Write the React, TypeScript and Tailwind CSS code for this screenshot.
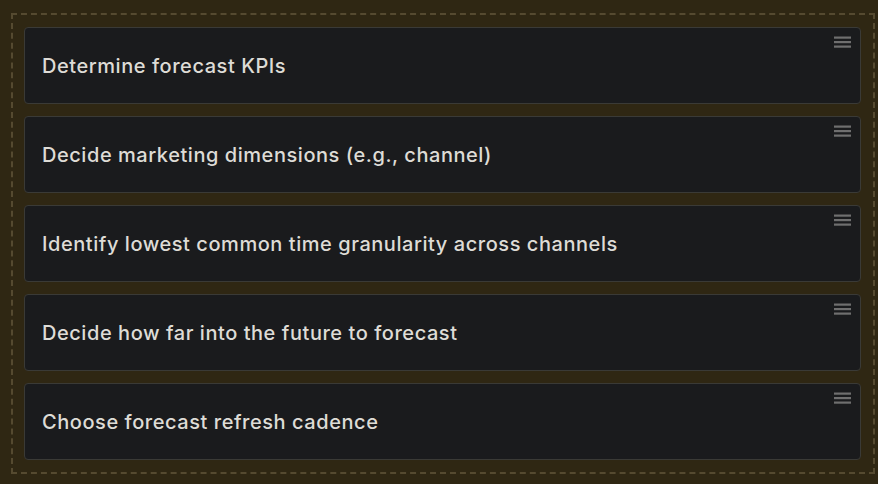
import React from "react";

const items = [
  "Determine forecast KPIs",
  "Decide marketing dimensions (e.g., channel)",
  "Identify lowest common time granularity across channels",
  "Decide how far into the future to forecast",
  "Choose forecast refresh cadence",
];

function Grip() {
  return (
    <svg width="17" height="12" viewBox="0 0 17 12" className="absolute right-[9px] top-[8px]">
      <rect x="0" y="0.5" width="17" height="2.2" fill="#6f6f6f" />
      <rect x="0" y="5" width="17" height="2.2" fill="#6f6f6f" />
      <rect x="0" y="9.5" width="17" height="2.2" fill="#6f6f6f" />
    </svg>
  );
}

export default function App() {
  return (
    <div className="w-[878px] h-[484px] bg-[#2f2713] pt-[13px] pl-[11px] pr-[3px]" style={{ fontFamily: "Inter, 'Noto Sans', sans-serif" }}>
      <div className="border-2 border-dashed border-[#554a30] pl-[11px] pr-[12px] pt-[12px] pb-[12px] flex flex-col gap-[12px]">
        {items.map((t) => (
          <div
            key={t}
            className="relative h-[77px] bg-[#1a1b1d] border border-[#3a3a36] rounded-[4px] flex items-center pl-[17px]"
          >
            <span className="text-[20px] font-medium text-[#dedcd6] tracking-[0.55px]">{t}</span>
            <Grip />
          </div>
        ))}
      </div>
    </div>
  );
}
